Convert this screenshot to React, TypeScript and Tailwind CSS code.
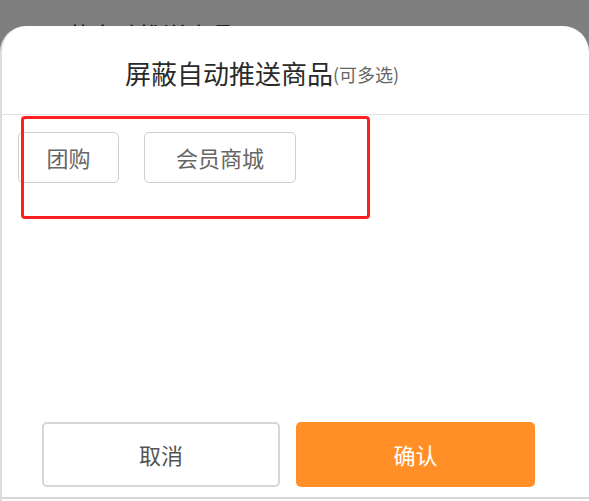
import React from "react"

const font = { fontFamily: '"Noto Sans CJK SC", "Noto Sans", sans-serif' }

export default function App() {
  return (
    <div className="relative h-[501px] w-full overflow-hidden bg-white" style={font}>
      {/* page behind the sheet */}
      <div className="pl-[43px] pt-[19px] text-[24px] leading-[32px] text-[#111]">屏蔽自动推送商品</div>

      {/* dim overlay */}
      <div className="absolute inset-0 bg-black/50" />

      {/* bottom sheet */}
      <div className="absolute left-0 right-0 top-[26px] bottom-0 flex flex-col rounded-t-[26px] bg-white border-l-2 border-[#dcdcdc]">
        <div className="flex h-[88px] items-center pl-[123px] pt-[4px] text-[#2a2a2a]">
          <span className="text-[26px]">屏蔽自动推送商品</span>
          <span className="mt-[4px] text-[18px] text-[#666]">(可多选)</span>
        </div>
        <div className="h-px bg-[#e3e3e3]" />

        <div className="flex gap-[25px] pl-[16px] pt-[17px]">
          <div className="flex h-[51px] w-[101px] items-center justify-center rounded-[5px] border border-[#cfcfcf] text-[22px] text-[#666]">
            团购
          </div>
          <div className="flex h-[51px] w-[152px] items-center justify-center rounded-[5px] border border-[#cfcfcf] text-[22px] text-[#666]">
            会员商城
          </div>
        </div>

        <div className="flex-1" />

        <div className="flex gap-[16px] pl-[40px] pb-[10px]">
          <button className="h-[65px] w-[238px] rounded-[5px] border-2 border-[#d6d6d6] bg-white text-[22px] text-[#555]">
            取消
          </button>
          <button className="h-[65px] w-[239px] rounded-[5px] bg-[#ff8f26] text-[22px] text-white">
            确认
          </button>
        </div>
        <div className="h-[2px] bg-[#d6d6d6]" />
        <div className="h-[2px]" />
      </div>

      {/* annotation box */}
      <div className="absolute left-[21px] top-[116px] h-[103px] w-[349px] rounded-[4px] border-[3px] border-[#ff1f1f]" />
    </div>
  )
}
